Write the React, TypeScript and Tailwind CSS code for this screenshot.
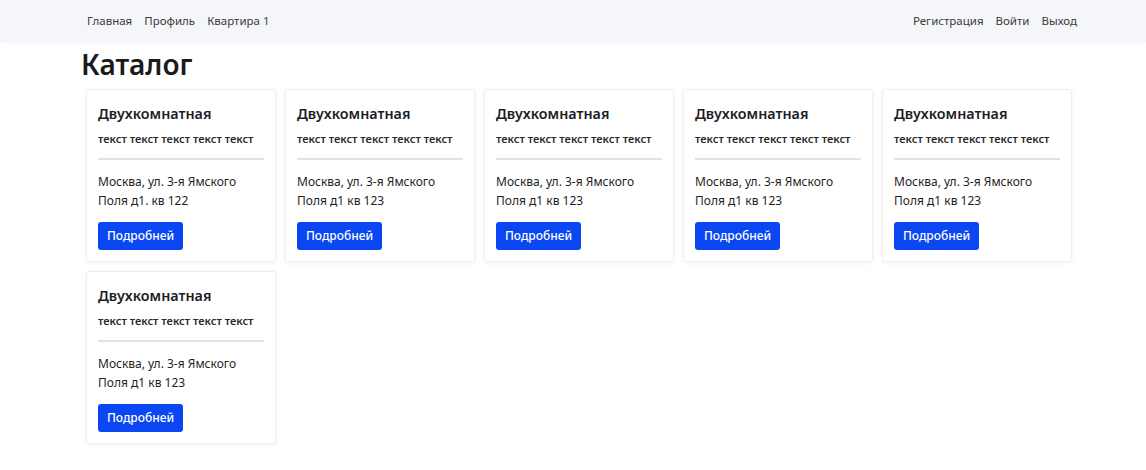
import React from 'react';

const flats = [
  { title: 'Двухкомнатная', text: 'текст текст текст текст текст', street: 'Москва, ул. 3-я Ямского', flat: 'Поля д1. кв 122' },
  { title: 'Двухкомнатная', text: 'текст текст текст текст текст', street: 'Москва, ул. 3-я Ямского', flat: 'Поля д1 кв 123' },
  { title: 'Двухкомнатная', text: 'текст текст текст текст текст', street: 'Москва, ул. 3-я Ямского', flat: 'Поля д1 кв 123' },
  { title: 'Двухкомнатная', text: 'текст текст текст текст текст', street: 'Москва, ул. 3-я Ямского', flat: 'Поля д1 кв 123' },
  { title: 'Двухкомнатная', text: 'текст текст текст текст текст', street: 'Москва, ул. 3-я Ямского', flat: 'Поля д1 кв 123' },
  { title: 'Двухкомнатная', text: 'текст текст текст текст текст', street: 'Москва, ул. 3-я Ямского', flat: 'Поля д1 кв 123' },
];

function FlatCard({ flat }: { flat: (typeof flats)[number] }) {
  return (
    <div className="flex flex-col border border-[#efefef] rounded-[3px] bg-white shadow-[0_1px_5px_rgba(0,0,0,0.05)] px-[11px] pt-[13px] pb-[11px]">
      <h3 className="text-[14.3px] leading-[22px] font-semibold text-[#1d1d1f] whitespace-nowrap">{flat.title}</h3>
      <p className="mt-[5px] text-[11px] leading-[18px] font-semibold text-[#2a2a2a] whitespace-nowrap">{flat.text}</p>
      <hr className="mt-[10px] border-0 h-[2px] bg-[#e3e3e3]" />
      <div className="mt-[12px] text-[12px] leading-[19px] text-[#1f1f1f] whitespace-nowrap">
        <p>{flat.street}</p>
        <p>{flat.flat}</p>
      </div>
      <button className="mt-[12px] self-start h-[28px] w-[85px] rounded-[3px] bg-[#0a47f2] text-white text-[12px] font-medium">
        Подробней
      </button>
    </div>
  );
}

function App() {
  return (
    <div className="min-h-screen bg-white" style={{ fontFamily: '"Noto Sans", "Open Sans", sans-serif' }}>
      <nav className="h-[42px] bg-[#f5f6f9] shadow-[0_2px_8px_rgba(0,0,0,0.03)] flex items-center justify-between pl-[87px] pr-[69px] text-[11.5px] text-[#3a3a3a]">
        <div className="flex gap-[12px]">
          <a>Главная</a>
          <a>Профиль</a>
          <a>Квартира 1</a>
        </div>
        <div className="flex gap-[12px]">
          <a>Регистрация</a>
          <a>Войти</a>
          <a>Выход</a>
        </div>
      </nav>

      <main className="px-[81px]">
        <h1 className="mt-[3px] text-[28px] leading-[38px] font-semibold text-[#1a1a1a]">Каталог</h1>
        <div className="mt-[6px] ml-[5px] grid grid-cols-[repeat(5,190px)] gap-x-[9px] gap-y-[9px]">
          {flats.map((flat, index) => (
            <FlatCard key={index} flat={flat} />
          ))}
        </div>
      </main>
    </div>
  );
}

export default App;
